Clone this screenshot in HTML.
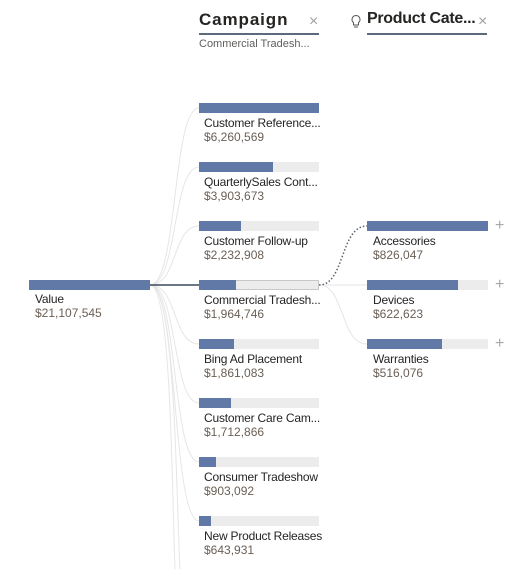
<!DOCTYPE html>
<html><head><meta charset="utf-8"><style>
*{margin:0;padding:0;box-sizing:border-box}
html,body{width:528px;height:569px;overflow:hidden}
body{background:#fff;position:relative;font-family:"Liberation Sans",sans-serif}
.bar{position:absolute;height:10px;background:#ececec}
.bar i{position:absolute;left:0;top:0;bottom:0;background:#6079a7}
.n{position:absolute;font-size:12px;letter-spacing:-0.2px;color:#252423;white-space:nowrap}
.v{position:absolute;font-size:12px;color:#6a5f56;white-space:nowrap}
.h{position:absolute;font-size:17px;font-weight:bold;color:#252423;white-space:nowrap}
.ul{position:absolute;height:2px;background:#5e6a7c}
.x{position:absolute;font-size:16px;color:#a0a0a0}
.p{position:absolute;font-size:16px;color:#a8a8a8}
</style></head><body>
<svg width="528" height="569" style="position:absolute;left:0;top:0">
<g fill="none" stroke="#e6e6e6" stroke-width="1">
<path d="M150 285 C178 285 172 108 199 108"/>
<path d="M150 285 C178 285 172 167 199 167"/>
<path d="M150 285 C178 285 172 226 199 226"/>
<path d="M150 285 C178 285 172 344 199 344"/>
<path d="M150 285 C178 285 172 403 199 403"/>
<path d="M150 285 C178 285 172 462 199 462"/>
<path d="M150 285 C178 285 172 521 199 521"/>
<path d="M150 285 C176 285 176 500 180 569"/>
<path d="M150 285 C172 285 172 500 175 569"/>
<path d="M319 285 L367 285"/>
<path d="M319 285 C345 285 340 344 367 344"/>
</g>
<path d="M150 285 L199 285" stroke="#3b4a5e" stroke-width="1.5"/>
<path d="M319 285 C345 285 340 226 367 226" fill="none" stroke="#5a6470" stroke-width="1.5" stroke-dasharray="1.5 2"/>
</svg>

<div class="h" style="left:199px;top:10px;letter-spacing:0.9px">Campaign</div>
<div class="x" style="left:309px;top:13px">×</div>
<div class="ul" style="left:199px;top:33px;width:120px"></div>
<div style="position:absolute;left:199px;top:38px;font-size:11px;color:#605e5c">Commercial Tradesh...</div>

<svg width="12" height="16" style="position:absolute;left:350px;top:14px"><path d="M6 1.5a4 4 0 0 0-2.5 7.1V11h5V8.6A4 4 0 0 0 6 1.5zM4 13h4" fill="none" stroke="#555" stroke-width="1"/></svg>
<div class="h" style="left:367px;top:10px;font-size:16px;letter-spacing:-0.3px">Product Cate...</div>
<div class="x" style="left:478px;top:13px">×</div>
<div class="ul" style="left:367px;top:33px;width:120px"></div>

<div class="bar" style="left:29px;top:280px;width:121px"><i style="width:121px"></i></div>
<div class="n" style="left:35px;top:292px">Value</div>
<div class="v" style="left:35px;top:306px">$21,107,545</div>

<div class="bar" style="left:199px;top:103px;width:120px"><i style="width:120px"></i></div>
<div class="n" style="left:204px;top:116px">Customer Reference...</div>
<div class="v" style="left:204px;top:130px">$6,260,569</div>

<div class="bar" style="left:199px;top:162px;width:120px"><i style="width:74px"></i></div>
<div class="n" style="left:204px;top:175px">QuarterlySales Cont...</div>
<div class="v" style="left:204px;top:189px">$3,903,673</div>

<div class="bar" style="left:199px;top:221px;width:120px"><i style="width:42px"></i></div>
<div class="n" style="left:204px;top:234px">Customer Follow-up</div>
<div class="v" style="left:204px;top:248px">$2,232,908</div>

<div class="bar" style="left:199px;top:280px;width:120px;border:1px solid #c8c8c8"><i style="width:37px;top:-1px;bottom:-1px;left:-1px"></i></div>
<div class="n" style="left:204px;top:293px">Commercial Tradesh...</div>
<div class="v" style="left:204px;top:307px">$1,964,746</div>

<div class="bar" style="left:199px;top:339px;width:120px"><i style="width:35px"></i></div>
<div class="n" style="left:204px;top:352px">Bing Ad Placement</div>
<div class="v" style="left:204px;top:366px">$1,861,083</div>

<div class="bar" style="left:199px;top:398px;width:120px"><i style="width:32px"></i></div>
<div class="n" style="left:204px;top:411px">Customer Care Cam...</div>
<div class="v" style="left:204px;top:425px">$1,712,866</div>

<div class="bar" style="left:199px;top:457px;width:120px"><i style="width:17px"></i></div>
<div class="n" style="left:204px;top:470px">Consumer Tradeshow</div>
<div class="v" style="left:204px;top:484px">$903,092</div>

<div class="bar" style="left:199px;top:516px;width:120px"><i style="width:12px"></i></div>
<div class="n" style="left:204px;top:529px">New Product Releases</div>
<div class="v" style="left:204px;top:543px">$643,931</div>

<div class="bar" style="left:367px;top:221px;width:121px"><i style="width:121px"></i></div>
<div class="p" style="left:495px;top:217px">+</div>
<div class="n" style="left:373px;top:234px">Accessories</div>
<div class="v" style="left:373px;top:248px">$826,047</div>

<div class="bar" style="left:367px;top:280px;width:121px"><i style="width:91px"></i></div>
<div class="p" style="left:495px;top:276px">+</div>
<div class="n" style="left:373px;top:293px">Devices</div>
<div class="v" style="left:373px;top:307px">$622,623</div>

<div class="bar" style="left:367px;top:339px;width:121px"><i style="width:75px"></i></div>
<div class="p" style="left:495px;top:335px">+</div>
<div class="n" style="left:373px;top:352px">Warranties</div>
<div class="v" style="left:373px;top:366px">$516,076</div>
</body></html>
